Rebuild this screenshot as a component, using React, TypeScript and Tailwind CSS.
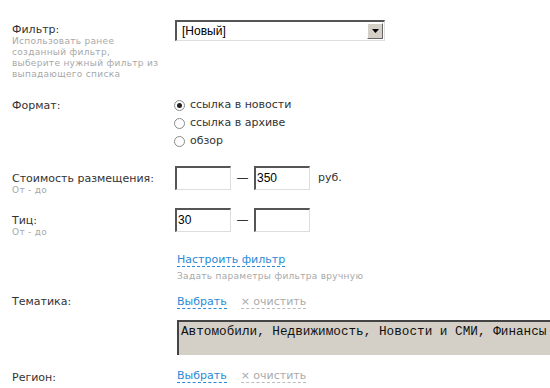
import React from 'react';

const font = { fontFamily: 'Verdana, "DejaVu Sans", sans-serif' };

function Hint({ children }: { children: React.ReactNode }) {
  return <div className="text-[9px] leading-[11px] text-[#a8a8a8] tracking-[0.3px]">{children}</div>;
}

function Radio({ checked, label }: { checked?: boolean; label: string }) {
  return (
    <label className="flex items-center h-[18px] gap-[5px]">
      <span className="w-[11px] h-[11px] rounded-full border border-[#8a8a8a] bg-white flex items-center justify-center">
        {checked && <span className="w-[5px] h-[5px] rounded-full bg-[#222]" />}
      </span>
      <span className="text-[11px] text-[#333]">{label}</span>
    </label>
  );
}

function Box({ value }: { value?: string }) {
  return (
    <div className="w-[56px] h-[24px] bg-white border-t-2 border-l-2 border-t-[#555] border-l-[#555] border-r border-b border-r-[#ddd] border-b-[#ddd] text-[12px] leading-[20px] pl-[1px] text-black font-['Liberation_Sans',sans-serif]">
      {value}
    </div>
  );
}

function Links() {
  return (
    <div className="flex items-center gap-[14px] text-[11px]">
      <span className="text-[#2a8ad8] border-b border-dashed border-[#2a8ad8] leading-[13px]">Выбрать</span>
      <span className="text-[#aaa] border-b border-dashed border-[#bbb] leading-[13px]">× очистить</span>
    </div>
  );
}

export default function App() {
  return (
    <div className="w-[550px] h-[388px] overflow-hidden bg-white text-[#333]" style={font}>
      <div className="pt-[22px] pl-[12px]">
        {/* Фильтр */}
        <div className="flex">
          <div className="w-[163px] pt-[1px]">
            <div className="text-[11px] leading-[13px]">Фильтр:</div>
            <Hint>
              Использовать ранее<br />созданный фильтр,<br />выберите нужный фильтр из<br />выпадающего списка
            </Hint>
          </div>
          <div className="-mt-[2px] w-[210px] h-[21px] border-t-2 border-l-2 border-t-[#555] border-l-[#555] border-r border-b border-r-[#ddd] border-b-[#ddd] bg-white flex items-center justify-between font-['Liberation_Sans',sans-serif]">
            <span className="text-[12px] pl-[5px] text-black">[Новый]</span>
            <span className="w-[16px] h-[16px] mr-[1px] bg-[#d4d0c8] border-t border-l border-white border-r border-b border-r-[#666] border-b-[#666] flex items-center justify-center">
              <svg width="7" height="4" viewBox="0 0 7 4"><path d="M0 0h7L3.5 4z" fill="#000" /></svg>
            </span>
          </div>
        </div>

        {/* Формат */}
        <div className="flex mt-[16px]">
          <div className="w-[163px] pt-[2px] text-[11px]">Формат:</div>
          <div className="-ml-[1px]">
            <Radio checked label="ссылка в новости" />
            <Radio label="ссылка в архиве" />
            <Radio label="обзор" />
          </div>
        </div>

        {/* Стоимость */}
        <div className="flex mt-[15px]">
          <div className="w-[163px] pt-[7px]">
            <div className="text-[11px] leading-[13px]">Стоимость размещения:</div>
            <Hint>От - до</Hint>
          </div>
          <div className="flex items-center h-[24px] mt-[1px]">
            <Box />
            <span className="w-[23px] text-center text-[12px]">—</span>
            <Box value="350" />
            <span className="ml-[8px] text-[11px]">руб.</span>
          </div>
        </div>

        {/* Тиц */}
        <div className="flex mt-[11px]">
          <div className="w-[163px] pt-[7px]">
            <div className="text-[11px] leading-[13px]">Тиц:</div>
            <Hint>От - до</Hint>
          </div>
          <div className="flex items-center h-[24px] mt-[1px]">
            <Box value="30" />
            <span className="w-[23px] text-center text-[12px]">—</span>
            <Box />
          </div>
        </div>

        {/* Настроить */}
        <div className="ml-[165px] mt-[8px]">
          <span className="text-[11px] text-[#2a8ad8] border-b border-dashed border-[#2a8ad8] leading-[13px]">Настроить фильтр</span>
          <div className="mt-[1px]"><Hint>Задать параметры фильтра вручную</Hint></div>
        </div>

        {/* Тематика */}
        <div className="flex mt-[13px]">
          <div className="w-[165px] shrink-0 text-[11px] leading-[13px]">Тематика:</div>
          <div className="flex-1 min-w-0">
            <Links />
            <div className="mt-[11px] h-[35px] bg-[#d4d0c8] border-t-2 border-l-2 border-t-[#444] border-l-[#444] pl-[2px] pt-[2px] text-[12.7px] leading-[16px] text-[#111] whitespace-nowrap overflow-hidden font-['Liberation_Mono',monospace]">
              Автомобили, Недвижимость, Новости и СМИ, Финансы
            </div>
          </div>
        </div>

        {/* Регион */}
        <div className="flex mt-[13px]">
          <div className="w-[165px] shrink-0 text-[11px] leading-[13px] pt-[3px]">Регион:</div>
          <Links />
        </div>
      </div>
    </div>
  );
}
